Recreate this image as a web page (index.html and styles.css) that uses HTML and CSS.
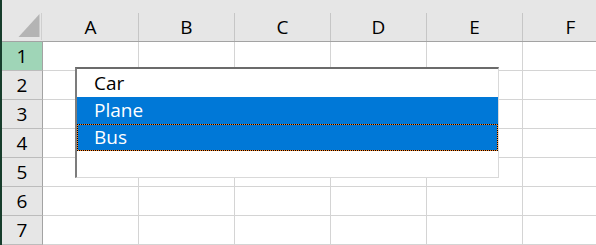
FILE: index.html
```html
<!DOCTYPE html>
<html lang="en">
<head>
  <meta charset="UTF-8">
  <meta name="viewport" content="width=device-width, initial-scale=1.0">
  <link rel="stylesheet" href="styles.css">
  <title>Sheet1 - List Box</title>
</head>
<body>
  <div class="window">
    <div class="sheet">
      <!-- column headers -->
      <div class="corner">
        <svg class="corner-mark" width="22" height="24" viewBox="0 0 22 24">
          <polygon points="0,24 21,1 21,24" fill="#b4b4b4"/>
        </svg>
      </div>
      <div class="col-head"><div class="col-label">A</div></div>
      <div class="col-head"><div class="col-label">B</div></div>
      <div class="col-head"><div class="col-label">C</div></div>
      <div class="col-head"><div class="col-label">D</div></div>
      <div class="col-head"><div class="col-label">E</div></div>
      <div class="col-head"><div class="col-label">F</div></div>

      <div class="row-head active">1</div>
      <div class="cell"></div><div class="cell"></div><div class="cell"></div><div class="cell"></div><div class="cell"></div><div class="cell"></div>
      <div class="row-head">2</div>
      <div class="cell"></div><div class="cell"></div><div class="cell"></div><div class="cell"></div><div class="cell"></div><div class="cell"></div>
      <div class="row-head">3</div>
      <div class="cell"></div><div class="cell"></div><div class="cell"></div><div class="cell"></div><div class="cell"></div><div class="cell"></div>
      <div class="row-head">4</div>
      <div class="cell"></div><div class="cell"></div><div class="cell"></div><div class="cell"></div><div class="cell"></div><div class="cell"></div>
      <div class="row-head">5</div>
      <div class="cell"></div><div class="cell"></div><div class="cell"></div><div class="cell"></div><div class="cell"></div><div class="cell"></div>
      <div class="row-head">6</div>
      <div class="cell"></div><div class="cell"></div><div class="cell"></div><div class="cell"></div><div class="cell"></div><div class="cell"></div>
      <div class="row-head">7</div>
      <div class="cell"></div><div class="cell"></div><div class="cell"></div><div class="cell"></div><div class="cell"></div><div class="cell"></div>
    </div>

    <!-- form control floating on the sheet -->
    <div class="listbox">
      <div class="item">Car</div>
      <div class="item selected">Plane</div>
      <div class="item selected focused">Bus</div>
    </div>
  </div>
</body>
</html>
```

FILE: styles.css
```css
html, body {
  margin: 0;
  padding: 0;
  background: #ffffff;
  overflow: hidden;
}
.window {
  position: relative;
  height: 245px;
  border-left: 2px solid #173d2c;
  font-family: "Open Sans", "Noto Sans", sans-serif;
  font-size: 19px;
  color: #000000;
}
.sheet {
  display: grid;
  grid-template-columns: 41px repeat(6, 96px);
  grid-template-rows: 42px repeat(7, 29px);
}
.sheet > div {
  box-sizing: border-box;
}
.corner {
  background: #e6e6e6;
  border-bottom: 1px solid #a3a3a3;
  padding-top: 13px;
}
.corner-mark {
  display: block;
  margin-left: 16px;
  border-right: 1px solid #cfcfcf;
  width: 24px;
  height: 27px;
  box-sizing: border-box;
  padding-bottom: 3px;
}
.col-head {
  background: #e6e6e6;
  border-bottom: 1px solid #a3a3a3;
  padding-top: 13px;
}
.col-label {
  height: 28px;
  line-height: 28px;
  text-align: center;
  border-right: 1px solid #c6c6c6;
}
.row-head {
  background: #e6e6e6;
  border-right: 1px solid #a3a3a3;
  border-bottom: 1px solid #bcbcbc;
  text-align: center;
  line-height: 28px;
}
.row-head.active {
  background: #9fd5b7;
}
.cell {
  border-right: 1px solid #d4d4d4;
  border-bottom: 1px solid #d4d4d4;
}
.listbox {
  position: absolute;
  left: 73px;
  top: 67px;
  width: 424px;
  height: 111px;
  box-sizing: border-box;
  background: #ffffff;
  border-top: 2px solid #6b6b6b;
  border-left: 2px solid #7c7c7c;
  border-right: 1px solid #d9d9d9;
  border-bottom: 1px solid #d9d9d9;
  padding-top: 1px;
}
.item {
  height: 27px;
  line-height: 27px;
  padding-left: 17px;
  box-sizing: border-box;
  white-space: nowrap;
}
.item.selected {
  background: #0078d7;
  color: #ffffff;
}
.item.focused {
  border: 1px dotted #000000;
  padding-left: 16px;
  line-height: 25px;
  background: linear-gradient(#0078d7, #0078d7) padding-box, #ff8728;
}
```
